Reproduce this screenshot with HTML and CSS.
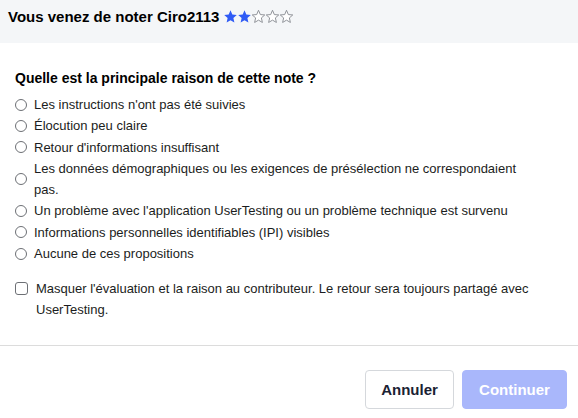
FILE: index.html
```html
<!DOCTYPE html>
<html lang="fr">
<head>
<meta charset="utf-8">
<link rel="stylesheet" href="styles.css">
</head>
<body>
<div class="modal">
  <header class="head">
    <h1 class="title">Vous venez de noter Ciro2113</h1>
    <span class="stars">
      <svg class="star" viewBox="0 0 24 24"><path class="on" d="M12 2l2.9 6.9 7.1.6-5.4 4.7 1.6 7.3L12 17.8 5.8 21.5l1.6-7.3L2 9.5l7.1-.6z"/></svg>
      <svg class="star" viewBox="0 0 24 24"><path class="on" d="M12 2l2.9 6.9 7.1.6-5.4 4.7 1.6 7.3L12 17.8 5.8 21.5l1.6-7.3L2 9.5l7.1-.6z"/></svg>
      <svg class="star" viewBox="0 0 24 24"><path class="off" d="M12 2l2.9 6.9 7.1.6-5.4 4.7 1.6 7.3L12 17.8 5.8 21.5l1.6-7.3L2 9.5l7.1-.6z"/></svg>
      <svg class="star" viewBox="0 0 24 24"><path class="off" d="M12 2l2.9 6.9 7.1.6-5.4 4.7 1.6 7.3L12 17.8 5.8 21.5l1.6-7.3L2 9.5l7.1-.6z"/></svg>
      <svg class="star" viewBox="0 0 24 24"><path class="off" d="M12 2l2.9 6.9 7.1.6-5.4 4.7 1.6 7.3L12 17.8 5.8 21.5l1.6-7.3L2 9.5l7.1-.6z"/></svg>
    </span>
  </header>
  <main class="body">
    <h2 class="question">Quelle est la principale raison de cette note ?</h2>
    <ul class="options">
      <li class="opt"><span class="radio"></span><span class="label">Les instructions n'ont pas été suivies</span></li>
      <li class="opt"><span class="radio"></span><span class="label">Élocution peu claire</span></li>
      <li class="opt"><span class="radio"></span><span class="label">Retour d'informations insuffisant</span></li>
      <li class="opt"><span class="radio"></span><span class="label">Les données démographiques ou les exigences de présélection ne correspondaient pas.</span></li>
      <li class="opt"><span class="radio"></span><span class="label">Un problème avec l'application UserTesting ou un problème technique est survenu</span></li>
      <li class="opt"><span class="radio"></span><span class="label">Informations personnelles identifiables (IPI) visibles</span></li>
      <li class="opt"><span class="radio"></span><span class="label">Aucune de ces propositions</span></li>
    </ul>
    <div class="check-row"><span class="checkbox"></span><span class="check-label">Masquer l'évaluation et la raison au contributeur. Le retour sera toujours partagé avec UserTesting.</span></div>
  </main>
  <footer class="foot">
    <button class="btn btn-cancel">Annuler</button>
    <button class="btn btn-primary" disabled>Continuer</button>
  </footer>
</div>
</body>
</html>
```
FILE: styles.css
```css
* { box-sizing: border-box; }
html, body { margin: 0; padding: 0; background: #fff; }
body {
  font-family: "Liberation Sans", Arial, sans-serif;
  color: #1b1d21;
  width: 578px;
  height: 418px;
  overflow: hidden;
}
.modal { display: flex; flex-direction: column; height: 418px; }
.head {
  background: #f4f6f8;
  height: 43px;
  display: flex;
  align-items: flex-start;
  padding: 7px 8px 0;
  gap: 4px;
}
.title {
  margin: 0;
  font-size: 15px;
  font-weight: 700;
  line-height: 20px;
  color: #000;
}
.stars { display: flex; gap: 0; padding-top: 2px; }
.star { width: 15px; height: 15px; display: block; margin-right: -1px; }
.star .on { fill: #2f5bf5; }
.star .off { fill: #fff; stroke: #8a8d93; stroke-width: 1.5; stroke-linejoin: round; }
.body { padding: 26px 15px 0; flex: 1; }
.question {
  margin: 0 0 7px;
  font-size: 14px;
  font-weight: 700;
  line-height: 18px;
  color: #000;
}
.options { list-style: none; margin: 0; padding: 0; }
.opt {
  display: flex;
  align-items: center;
  gap: 7px;
  font-size: 13px;
  line-height: 21.3px;
}
.radio {
  flex: none;
  width: 12px;
  height: 12px;
  border: 1px solid #6d7075;
  border-radius: 50%;
}
.label { max-width: 500px; }
.check-row {
  display: flex;
  align-items: flex-start;
  gap: 8px;
  margin-top: 14px;
  font-size: 13px;
  line-height: 21px;
}
.checkbox {
  flex: none;
  width: 13px;
  height: 13px;
  border: 1px solid #6d7075;
  border-radius: 3px;
  margin-top: 4px;
}
.check-label { max-width: 500px; }
.foot {
  border-top: 1px solid #dcdcdc;
  height: 73px;
  display: flex;
  justify-content: flex-end;
  align-items: flex-start;
  gap: 8px;
  padding: 24px 11px 0 0;
}
.btn {
  font-family: inherit;
  font-size: 15px;
  font-weight: 700;
  height: 39px;
  border-radius: 4px;
  padding: 0 14px;
}
.btn-cancel { background: #fff; border: 1px solid #d5d8dc; color: #1a2233; width: 89px; }
.btn-primary { background: #a9b7fb; border: 1px solid #a9b7fb; color: #fff; width: 105px; }
```
